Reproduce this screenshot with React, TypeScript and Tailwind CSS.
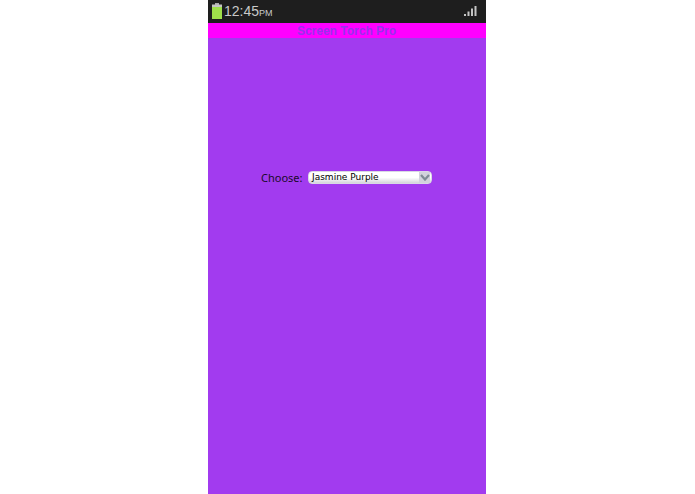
import React from "react";

const BatteryIcon = () => (
  <svg width="10" height="16" viewBox="0 0 10 16">
    <rect x="3" y="0" width="4" height="2" fill="#a9a9a9" />
    <rect x="0" y="1.5" width="10" height="3" fill="#c4c4c4" />
    <rect x="0" y="4" width="10" height="12" fill="#9fe04a" />
  </svg>
);

const SignalIcon = () => (
  <svg width="13" height="10" viewBox="0 0 13 10" fill="#c4c4c4">
    <rect x="0" y="8" width="2" height="2" />
    <rect x="3.5" y="5.5" width="2" height="4.5" />
    <rect x="7" y="2.5" width="2" height="7.5" />
    <rect x="10.5" y="0" width="2" height="10" />
  </svg>
);

const Chevron = () => (
  <svg width="10" height="7" viewBox="0 0 10 7" fill="none">
    <path d="M1 1 L5 5.5 L9 1" stroke="#7f8a96" strokeWidth="2.2" />
  </svg>
);

export default function App() {
  return (
    <div className="h-[494px] w-[695px] overflow-hidden bg-white pl-[208px] font-['Liberation_Sans',sans-serif]">
      <div className="flex h-full w-[278px] flex-col bg-[#a23bef]">
        {/* Status bar */}
        <div className="flex h-[23px] items-center justify-between bg-[#1e1e1e] pb-[1px] pl-[4px] pr-[9px]">
          <div className="flex items-center gap-[2px]">
            <BatteryIcon />
            <span className="text-[14px] leading-none text-[#c9c9c9]">
              12:45<span className="text-[9px]">PM</span>
            </span>
          </div>
          <SignalIcon />
        </div>

        {/* Title bar */}
        <div className="flex h-[15px] items-center justify-center bg-[#ff00ff] pr-[1px] text-[12px] font-bold leading-none text-[#9a30ee]">
          Screen Torch Pro
        </div>

        {/* Color picker */}
        <div className="mt-[133px] flex items-center pl-[53px]">
          <span className="mb-[1px] w-[47px] shrink-0 font-['Noto_Sans',sans-serif] text-[11px] leading-none text-[#1a0a2a]">
            Choose:
          </span>
          <div className="flex h-[13px] w-[124px] items-center justify-between rounded-[4px] border border-[#d8d8e4] bg-gradient-to-b from-white via-white to-[#d4d4da] pl-[3px] pr-[1px]">
            <span className="font-['DejaVu_Sans',sans-serif] text-[9px] leading-none text-black">
              Jasmine Purple
            </span>
            <div className="flex h-full w-[11px] items-center justify-center bg-[#d2d2dc]">
              <Chevron />
            </div>
          </div>
        </div>
      </div>
    </div>
  );
}
